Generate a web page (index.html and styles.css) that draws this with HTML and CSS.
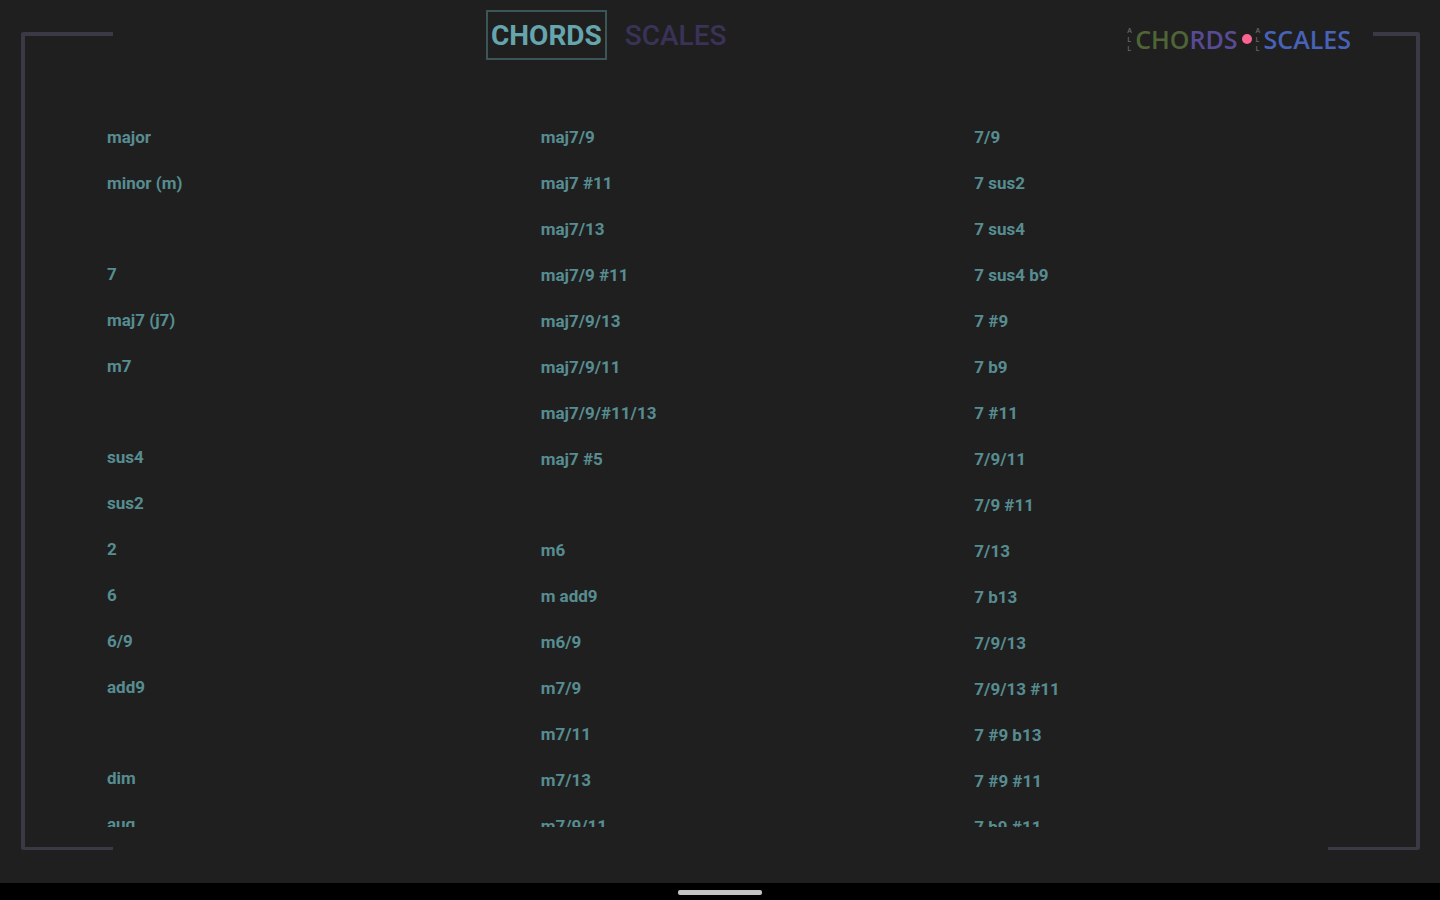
FILE: index.html
```html
<!DOCTYPE html>
<html lang="en">
<head>
  <meta charset="UTF-8" />
  <meta name="viewport" content="width=device-width, initial-scale=1.0"/>
  <title>All Chords - All Scales</title>
  <link rel="stylesheet" href="styles.css">
</head>
<body>
  <main id="stage">
    <div class="bracket bracket-left"></div>
    <div class="bracket bracket-right"></div>

    <header>
      <nav class="tabs">
        <button class="tab active" type="button">CHORDS</button>
        <button class="tab" type="button">SCALES</button>
      </nav>
      <div class="logo">
        <span class="all"><span>A</span><span>L</span><span>L</span></span>
        <span class="word"><span class="green">CHO</span><span class="purple">RDS</span></span>
        <span class="dot"></span>
        <span class="all"><span>A</span><span>L</span><span>L</span></span>
        <span class="word blue">SCALES</span>
      </div>
    </header>

    <div id="chords">
      <ul>
        <li><button type="button">major</button></li>
        <li><button type="button">minor (m)</button></li>
        <li class="gap"></li>
        <li><button type="button">7</button></li>
        <li><button type="button">maj7 (j7)</button></li>
        <li><button type="button">m7</button></li>
        <li class="gap"></li>
        <li><button type="button">sus4</button></li>
        <li><button type="button">sus2</button></li>
        <li><button type="button">2</button></li>
        <li><button type="button">6</button></li>
        <li><button type="button">6/9</button></li>
        <li><button type="button">add9</button></li>
        <li class="gap"></li>
        <li><button type="button">dim</button></li>
        <li><button type="button">aug</button></li>
      </ul>
      <ul>
        <li><button type="button">maj7/9</button></li>
        <li><button type="button">maj7 #11</button></li>
        <li><button type="button">maj7/13</button></li>
        <li><button type="button">maj7/9 #11</button></li>
        <li><button type="button">maj7/9/13</button></li>
        <li><button type="button">maj7/9/11</button></li>
        <li><button type="button">maj7/9/#11/13</button></li>
        <li><button type="button">maj7 #5</button></li>
        <li class="gap"></li>
        <li><button type="button">m6</button></li>
        <li><button type="button">m add9</button></li>
        <li><button type="button">m6/9</button></li>
        <li><button type="button">m7/9</button></li>
        <li><button type="button">m7/11</button></li>
        <li><button type="button">m7/13</button></li>
        <li><button type="button">m7/9/11</button></li>
      </ul>
      <ul>
        <li><button type="button">7/9</button></li>
        <li><button type="button">7 sus2</button></li>
        <li><button type="button">7 sus4</button></li>
        <li><button type="button">7 sus4 b9</button></li>
        <li><button type="button">7 #9</button></li>
        <li><button type="button">7 b9</button></li>
        <li><button type="button">7 #11</button></li>
        <li><button type="button">7/9/11</button></li>
        <li><button type="button">7/9 #11</button></li>
        <li><button type="button">7/13</button></li>
        <li><button type="button">7 b13</button></li>
        <li><button type="button">7/9/13</button></li>
        <li><button type="button">7/9/13 #11</button></li>
        <li><button type="button">7 #9 b13</button></li>
        <li><button type="button">7 #9 #11</button></li>
        <li><button type="button">7 b9 #11</button></li>
      </ul>
    </div>
  </main>

  <footer>
    <div class="home-bar"></div>
  </footer>
</body>
</html>
```
FILE: styles.css
```css
* {
  box-sizing: border-box;
}

body {
  margin: 0;
  height: 100vh;
  display: flex;
  flex-direction: column;
  background: #000;
  font-family: Roboto, sans-serif;
  color: #578d91;
}

button {
  padding: 0;
  border: none;
  background: none;
  color: inherit;
  font-family: inherit;
  cursor: pointer;
}

#stage {
  position: relative;
  flex: 1;
  min-height: 0;
  display: flex;
  flex-direction: column;
  padding-bottom: 56px;
  background: #1f1f1f;
}

/* corner brackets round the page */
.bracket {
  position: absolute;
  top: 32px;
  bottom: 33px;
  width: 92px;
  border: 0 solid #3b3945;
  border-top-width: 4px;
  border-bottom-width: 3px;
  pointer-events: none;
}

.bracket-left {
  left: 21px;
  border-left-width: 4px;
  border-radius: 3px 0 0 3px;
}

.bracket-right {
  right: 20px;
  border-right-width: 4px;
  border-radius: 0 3px 3px 0;
}

header {
  position: relative;
  display: flex;
  justify-content: space-between;
  align-items: flex-start;
  height: 114px;
  padding: 10px 67px 0 calc(50% - 234px);
}

.tabs {
  display: flex;
  gap: 13px;
}

.tab {
  height: 50px;
  padding: 0 3px;
  border: 2px solid transparent;
  color: #3a3257;
  font-size: 28px;
  font-weight: 500;
}

.tab.active {
  border-color: #3c5557;
  color: #66a5ad;
  font-weight: 700;
}

.logo {
  display: flex;
  align-items: center;
  margin-top: 13px;
  padding-right: 22px;
  background: #1f1f1f;
  font-family: "Open Sans", sans-serif;
  font-size: 25px;
  font-weight: 600;
  line-height: 32px;
}

.all {
  display: flex;
  flex-direction: column;
  width: 8px;
  color: #6a6a6a;
  font-size: 7px;
  line-height: 9px;
}

.green {
  color: #4f6437;
}

.purple {
  color: #584b94;
}

.blue {
  color: #4862b8;
}

.dot {
  width: 10px;
  height: 10px;
  margin: 0 4px;
  border-radius: 50%;
  background: #fb6490;
}

#chords {
  flex: 1;
  min-height: 0;
  display: grid;
  grid-template-columns: repeat(3, 1fr);
  padding: 0 32px 0 107px;
  overflow: hidden;
}

#chords ul {
  margin: 0;
  padding: 0;
  list-style: none;
}

#chords li {
  height: 46px;
}

#chords li.gap {
  height: 45px;
}

#chords button {
  height: 46px;
  font-size: 17px;
  font-weight: 700;
}

footer {
  display: flex;
  justify-content: center;
  height: 17px;
  padding-top: 7px;
}

.home-bar {
  width: 84px;
  height: 5px;
  border-radius: 2px;
  background: #c4c4c4;
}
```
